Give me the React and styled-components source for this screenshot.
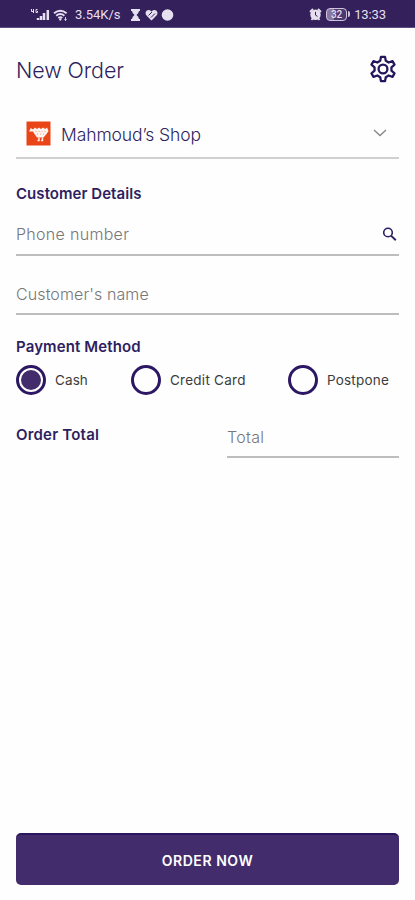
import React, { useState } from 'react';
import styled, { createGlobalStyle } from 'styled-components';

const PURPLE = '#432c6b';
const INK = '#2e1f60';

const METHODS = [
  { label: 'Cash', width: 115, spacing: 0.1 },
  { label: 'Credit Card', width: 157, spacing: 0.25 },
  { label: 'Postpone', width: 111, spacing: 0.2 },
];

const GlobalStyle = createGlobalStyle`
  * { box-sizing: border-box; }

  body {
    margin: 0;
    background-color: #fefefe;
    font-family: Inter, 'Open Sans', sans-serif;
  }
`;

const Screen = styled.div`
  height: 900px;
  display: flex;
  flex-direction: column;
`;

const StatusBar = styled.div`
  height: 28px;
  padding: 2px 29px 0 30px;
  display: flex;
  align-items: center;
  background-color: #34205b;
  border-bottom: 1px solid #5e4d7e;
  color: #e6dff0;
  font-family: Roboto, sans-serif;
  font-size: 13px;
`;

const StatusText = styled.span`
  margin: 0 ${({ $right }) => $right || 0}px 0 ${({ $left }) => $left || 0}px;
  letter-spacing: ${({ $spacing }) => $spacing || 0}px;
  white-space: nowrap;
`;

const Spacer = styled.div`
  flex: 1;
`;

const Content = styled.main`
  flex: 1;
  padding: 0 16px 15px;
  display: flex;
  flex-direction: column;
`;

const Header = styled.header`
  height: 81px;
  padding-right: 2px;
  display: flex;
  align-items: center;
  justify-content: space-between;
`;

const Title = styled.h1`
  margin: 3px 0 0;
  color: ${INK};
  font-size: 21.5px;
  font-weight: 300;
  letter-spacing: -0.1px;
`;

const ShopSelect = styled.div`
  height: 50px;
  padding: 0 12px 0 10px;
  display: flex;
  align-items: center;
  border-bottom: 2px solid #d0d0d0;
`;

const ShopName = styled.span`
  flex: 1;
  margin: 2px 0 0 10px;
  color: ${INK};
  font-size: 17.5px;
  font-weight: 300;
  letter-spacing: -0.1px;
`;

const SectionTitle = styled.h2`
  margin: ${({ $top }) => $top}px 0 0;
  color: ${INK};
  font-size: 15px;
  font-weight: 600;
  line-height: 20px;
  letter-spacing: ${({ $spacing }) => $spacing}px;
  white-space: nowrap;
`;

const Field = styled.label`
  width: ${({ $width }) => $width || '100%'};
  height: ${({ $height }) => $height}px;
  padding: 0 2px ${({ $bottom }) => $bottom}px 0;
  display: flex;
  align-items: flex-end;
  border-bottom: 2px solid #bdbdbd;
`;

const Input = styled.input`
  flex: 1;
  min-width: 0;
  height: 20px;
  padding: 0;
  border: none;
  outline: none;
  background: none;
  font-family: inherit;
  font-size: 16px;
  font-weight: 300;
  letter-spacing: ${({ $spacing }) => $spacing}px;

  &::placeholder {
    color: #777;
    opacity: 1;
  }
`;

const Methods = styled.div`
  margin-top: 8px;
  display: flex;
`;

const Method = styled.button`
  width: ${({ $width }) => $width}px;
  height: 30px;
  padding: 0;
  display: flex;
  align-items: center;
  border: none;
  background: none;
  color: #3c3c3c;
  font-family: inherit;
  font-size: 13.5px;
  letter-spacing: ${({ $spacing }) => $spacing}px;
  white-space: nowrap;
`;

const Ring = styled.span`
  width: 30px;
  height: 30px;
  margin-right: 9px;
  flex: none;
  display: flex;
  align-items: center;
  justify-content: center;
  border: 3px solid #2b1763;
  border-radius: 50%;

  &::after {
    content: '';
    width: 20px;
    height: 20px;
    border-radius: 50%;
    background-color: ${({ $checked }) => ($checked ? PURPLE : 'transparent')};
  }
`;

const TotalRow = styled.div`
  margin-top: 29px;
  display: flex;
  justify-content: space-between;
`;

const OrderButton = styled.button`
  height: 52px;
  margin-top: auto;
  padding: 0;
  border: none;
  border-top: 2px solid #2b1560;
  border-radius: 5px;
  background-color: ${PURPLE};
  color: #fff;
  font-family: inherit;
  font-size: 14px;
  font-weight: 600;
  letter-spacing: 0.55px;
`;

const SignalIcons = () => (
  <svg width="39" height="14" viewBox="0 0 39 14" fill="none" stroke="currentColor">
    <path d="M1.5 1v2.500h2M3.500 1v4M7.500 1.500H6v3h1.500V3" />
    <path d="M8 12v-2M11 12V8M14 12V5M17.800 12V2" strokeWidth="2.500" />
    <path d="M24 5.200q6.300-5 12.600 0M26.200 7.700q4.100-3.300 8.200 0M28.300 10q2-1.600 4 0" strokeWidth="1.900" />
    <circle cx="30.300" cy="11.500" r="0.800" fill="currentColor" />
    <path d="M35.500 9v3.500M34.300 11.300l1.200 1.200 1.200-1.200" strokeWidth="0.900" />
  </svg>
);

const NoticeIcons = () => (
  <svg width="45" height="14" viewBox="0 0 45 14" fill="currentColor">
    <path d="M1 1h9v2H9Q8.700 5.500 6.500 7 8.700 8.500 9 11h1v2H1v-2h1q.3-2.500 2.500-4Q2.300 5.500 2 3H1z" />
    <path d="M21.500 12.500 16.500 7.500Q14.500 5 16.500 2.700 19 1 21.500 3.500 24 1 26.500 2.700 28.500 5 26.500 7.500z" />
    <path d="M18.500 7.500l3.500-3.500M21 9.500l4-4" fill="none" stroke="#34205b" />
    <circle cx="37.500" cy="7" r="5.800" />
  </svg>
);

const AlarmIcon = () => (
  <svg width="13" height="13" viewBox="0 0 13 13">
    <path d="M1 4 4 1M9 1l3 3M2.500 12l1.500-2M10.500 12 9 10" stroke="currentColor" strokeWidth="1.800" />
    <circle cx="6.500" cy="6.800" r="5.200" fill="currentColor" />
    <path d="M6.500 3.800v3.300l2 1.300" fill="none" stroke="#34205b" />
  </svg>
);

const Battery = styled.span`
  position: relative;
  width: 21px;
  height: 13px;
  margin-left: 4px;
  border: 1.5px solid #cfc4df;
  border-radius: 4px;
  background: linear-gradient(to right, #8778a2 35%, #4b3970 35%);
  font-size: 10px;
  font-weight: 500;
  line-height: 11px;
  text-align: center;

  &::after {
    content: '';
    position: absolute;
    top: 2px;
    right: -4px;
    width: 2px;
    height: 6px;
    border-radius: 0 2px 2px 0;
    background-color: #cfc4df;
  }
`;

// six teeth, each one drawn as four corners
const gearPoints = () => {
  const points = [];
  for (let i = 0; i < 6; i++) {
    [[-19, 8.6], [-9.5, 12.3], [9.5, 12.3], [19, 8.6]].forEach(([offset, r]) => {
      const angle = ((i * 60 + offset - 90) * Math.PI) / 180;
      points.push(`${(14 + r * Math.cos(angle)).toFixed(2)},${(14 + r * Math.sin(angle)).toFixed(2)}`);
    });
  }
  return points.join(' ');
};

const GearIcon = () => (
  <svg width="28" height="28" viewBox="0 0 28 28" fill="none" stroke="#25155c" strokeWidth="2.300" strokeLinejoin="round">
    <polygon points={gearPoints()} />
    <circle cx="14" cy="14" r="4.400" />
  </svg>
);

const ShopLogo = () => (
  <svg width="25" height="25" viewBox="0 0 25 25">
    <path d="M.5.5h24v24H.5z" fill="#e94518" />
    <path d="M3 10.500 4.800 7 7 8.500 9 6.500l2 1.500L13 6.500 15 8l2-1.500L19 8l2-1.500L22.500 10 20.500 13l-3 3.500h-6.500L8.500 13 7 10.500z" fill="#fff4ed" />
    <path d="M10 10.500h.1M13 10.500h.1M16 10.500h.1M19 10.500h.1M11.500 13h.1M14.500 13h.1M17.500 13h.1" stroke="#f2937a" strokeWidth="1.100" strokeLinecap="round" />
    <path d="M13 16.500v3h-1.500M16.500 16.500v3H15" fill="none" stroke="#fff4ed" strokeWidth="1.400" />
  </svg>
);

const ChevronIcon = () => (
  <svg width="14" height="8" viewBox="0 0 14 8" fill="none" stroke="#858585" strokeWidth="1.300">
    <path d="M1 1l6 5.500L13 1" />
  </svg>
);

const SearchIcon = () => (
  <svg width="15" height="17" viewBox="0 0 15 17" fill="none" stroke={INK}>
    <circle cx="6" cy="5.500" r="4.300" strokeWidth="1.600" />
    <path d="M9 8.600l4.800 4.700" strokeWidth="1.900" />
  </svg>
);

export default () => {
  const [method, setMethod] = useState('Cash');

  return (
    <Screen>
      <GlobalStyle />
      <StatusBar>
        <SignalIcons />
        <StatusText $left={6} $right={9} $spacing={0}>3.54K/s</StatusText>
        <NoticeIcons />
        <Spacer />
        <AlarmIcon />
        <Battery>32</Battery>
        <StatusText $left={7} $spacing={-0.1}>13:33</StatusText>
      </StatusBar>
      <Content>
        <Header>
          <Title>New Order</Title>
          <GearIcon />
        </Header>
        <ShopSelect>
          <ShopLogo />
          <ShopName>Mahmoud’s Shop</ShopName>
          <ChevronIcon />
        </ShopSelect>
        <SectionTitle $top={25} $spacing={0.05}>Customer Details</SectionTitle>
        <Field $height={52} $bottom={10}>
          <Input placeholder="Phone number" $spacing={0.3} />
          <SearchIcon />
        </Field>
        <Field $height={59} $bottom={9}>
          <Input placeholder="Customer's name" $spacing={0.1} />
        </Field>
        <SectionTitle $top={22} $spacing={0.12}>Payment Method</SectionTitle>
        <Methods>
          {METHODS.map(({ label, width, spacing }) => (
            <Method key={label} $width={width} $spacing={spacing} onClick={() => setMethod(label)}>
              <Ring $checked={method === label} />
              {label}
            </Method>
          ))}
        </Methods>
        <TotalRow>
          <SectionTitle $top={1} $spacing={0.2}>Order Total</SectionTitle>
          <Field $width="172px" $height={34} $bottom={9}>
            <Input placeholder="Total" $spacing={0.3} />
          </Field>
        </TotalRow>
        <OrderButton>ORDER NOW</OrderButton>
      </Content>
    </Screen>
  );
};
